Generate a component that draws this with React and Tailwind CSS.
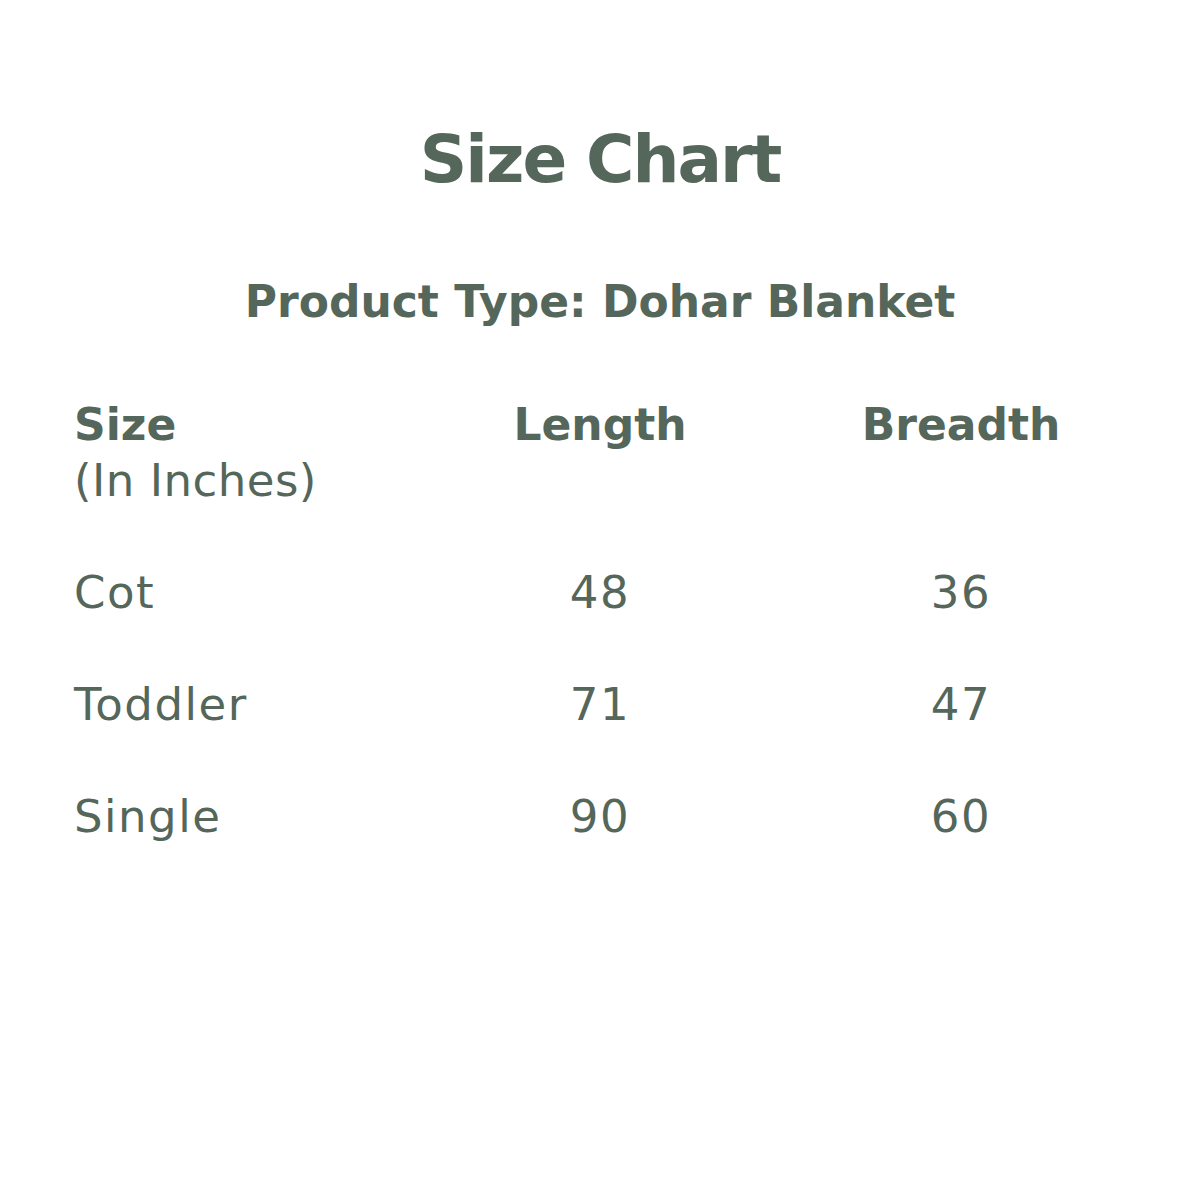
export default function App() {
  const rows = [
    ["Cot", "48", "36"],
    ["Toddler", "71", "47"],
    ["Single", "90", "60"],
  ];
  return (
    <div className="w-[1200px] h-[1200px] bg-white text-[#55665a] font-['DejaVu_Sans',sans-serif]">
      <div className="pt-[118px] flex flex-col items-center">
        <h1 className="text-[66px] font-bold leading-[84px] tracking-[-2px]">Size Chart</h1>
        <h2 className="mt-[74px] text-[44px] font-bold leading-[52px]">Product Type: Dohar Blanket</h2>
      </div>
      <div className="mt-[69px] pl-[74px] grid grid-cols-[346px_360px_362px]">
        <div className="flex flex-col">
          <span className="text-[44px] font-bold leading-[56px]">Size</span>
          <span className="text-[45px] leading-[56px] tracking-[0.5px]">(In Inches)</span>
        </div>
        <div className="text-center text-[44px] font-bold leading-[56px]">Length</div>
        <div className="text-center text-[44px] font-bold leading-[56px]">Breadth</div>
        {rows.map((r) => (
          <div key={r[0]} className="contents">
            <div className="mt-[56px] text-[45px] leading-[56px] tracking-[1.5px]">{r[0]}</div>
            <div className="mt-[56px] text-center text-[45px] leading-[56px] tracking-[1.5px]">{r[1]}</div>
            <div className="mt-[56px] text-center text-[45px] leading-[56px] tracking-[1.5px]">{r[2]}</div>
          </div>
        ))}
      </div>
    </div>
  );
}
